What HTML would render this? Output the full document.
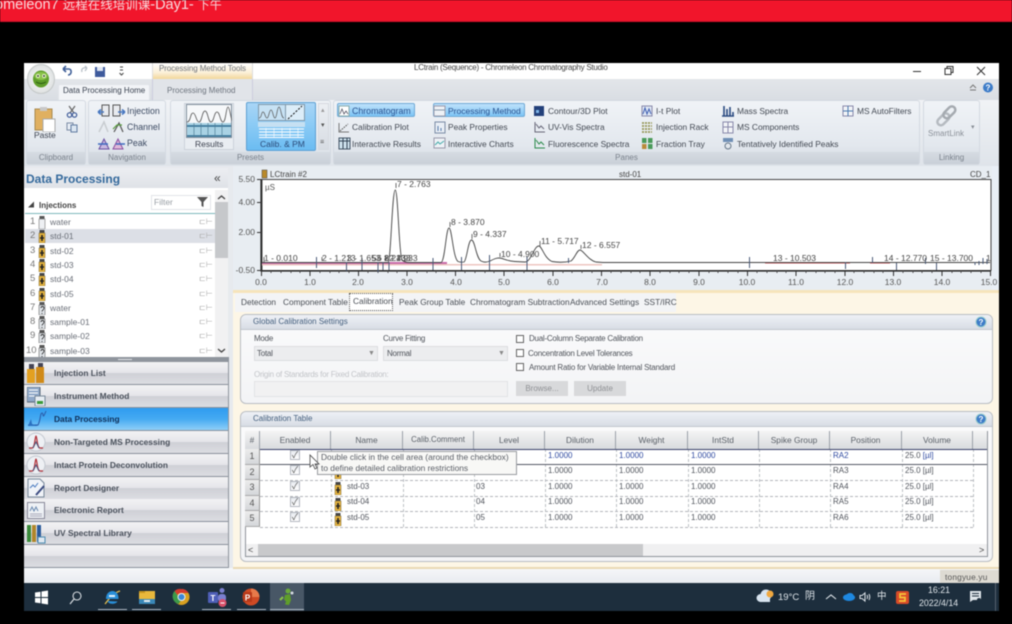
<!DOCTYPE html>
<html><head><meta charset="utf-8"><title>Chromeleon Chromatography Studio</title>
<style>
html,body{margin:0;padding:0;background:#000;width:1012px;height:624px;overflow:hidden}
*{box-sizing:border-box}
body{font-family:"Liberation Sans","Noto Sans CJK SC",sans-serif;font-size:9.5px;color:#3a3f48;position:relative}
div,span.t,svg.a{position:absolute}
.t{position:absolute;white-space:nowrap;line-height:12px}
.p{font-size:8.4px;color:#424852}
.f{font-size:8px;letter-spacing:-.25px;color:#50545b}
#root{position:absolute;left:0;top:0;width:1012px;height:624px;filter:blur(.4px)}
.grp{background:linear-gradient(#f0f3f7,#e3e8ee 70%,#d5dbe3);border:1px solid #d3d9e1;border-radius:3px;top:100px;height:65px}
.lab{position:absolute;left:0;right:0;bottom:0;height:12px;background:linear-gradient(#d6dbe2,#c9d0d8);text-align:center;line-height:12px;color:#7a828c;font-size:8px}
.sel{background:linear-gradient(#bfe2fb,#7cc4f5);border:1px solid #6fa9d6;border-radius:2px;height:14px}
.nav{position:absolute;left:24px;width:204px;height:23px;background:linear-gradient(#f2f2f4,#e6e6ea 48%,#cfd0d6 52%,#dcdde2);border-bottom:1px solid #8a919c;color:#4a515c;font-weight:bold;font-size:8.400px}
.nav .t{left:30px;top:5px}
.g{background:linear-gradient(#fbfbfc,#f3f4f6);border:1px solid #b9bdc3;border-radius:6px;left:240px;width:753px}
.gh{position:absolute;left:0;right:0;top:0;height:15px;background:linear-gradient(#eef1f6,#d8dde5);border-bottom:1px solid #c2c7cf;border-radius:6px 6px 0 0}
.h{position:absolute;top:431px;height:18px;background:linear-gradient(#f4f4f4,#d9dbde);border-right:1px solid #9aa0a8;text-align:center;line-height:18px;color:#5a6068;font-size:8.400px}
.c{position:absolute;font-size:8px;line-height:12px;color:#50545c;white-space:nowrap}
.b{color:#2f4aa0}
.ln{position:absolute;left:260px;width:713px;height:0;border-top:1px dashed #b3b6bb}
.vl{position:absolute;top:449px;height:78px;width:0;border-left:1px dashed #bcbfc4}
.cb{position:absolute;width:10px;height:10px;left:290px;border:1px solid #b4b8c0;background:linear-gradient(#e8ebf0,#fff);color:#555;font-size:9px;line-height:9px;text-align:center}
.num{position:absolute;left:245px;width:15px;background:linear-gradient(#ececec,#d5d7da);border-bottom:1px solid #aaa;border-right:1px solid #999;text-align:center;font-size:9px;color:#555;line-height:15px}
.tab{position:absolute;top:296px;font-size:8.300px;color:#4a4f56;white-space:nowrap;line-height:12px}
.ul{position:absolute;top:609px;height:1px;background:#aeb8c2;width:29px}
.n{position:absolute;left:30px;color:#777;font-size:9.500px;line-height:12px}
.s{position:absolute;left:50px;color:#6a6f78;font-size:8.500px;line-height:12px;white-space:nowrap}
.m{position:absolute;left:199px;color:#aaa;font-size:8px;line-height:12px}
</style></head><body>
<div id="root">
<svg width="0" height="0" style="position:absolute">
<defs>
<symbol id="vy" viewBox="0 0 8 13"><rect x="1.500" width="5" height="3" fill="#444"/><rect x="1" y="3" width="6" height="10" fill="#e5b23c" stroke="#7a6a3a" stroke-width=".5"/><path d="M4 5v6M2 8h4" stroke="#222" stroke-width="1.600"/></symbol>
<symbol id="vw" viewBox="0 0 8 13"><rect x="1.500" width="5" height="3" fill="#555"/><rect x="1" y="3" width="6" height="10" fill="#eef0f3" stroke="#777" stroke-width=".6"/></symbol>
<symbol id="vq" viewBox="0 0 8 13"><rect x="1.500" width="5" height="3" fill="#555"/><rect x="1" y="3" width="6" height="10" fill="#dfe3e8" stroke="#666" stroke-width=".6"/><path d="M3 6c0-2 3-2 3 0s-2 2-2 3.500M4 11v1" fill="none" stroke="#333" stroke-width=".9"/></symbol>
<symbol id="pk" viewBox="0 0 20 20"><circle cx="10" cy="10" r="9" fill="#eef0f4" stroke="#c3c8d0"/><path d="M3 16h3c3 0 3-12 4-12s1 12 4 12h3" fill="none" stroke="#b03038" stroke-width="1.200"/><path d="M7 16l3-6 3 6" fill="none" stroke="#4a5a80"/></symbol>
</defs></svg>

<!-- red top bar -->
<div style="left:0;top:0;width:1012px;height:22px;background:#f1152b;overflow:hidden;border-bottom:1px solid #c9122a"><span class="t" style="left:-5px;top:-3px;font-size:14.500px;line-height:16px;color:#f6d9dc">omeleon7 <span style="font-size:12.500px">远程在线培训课</span>-Day1- <span style="font-size:12px">下午</span></span></div>

<!-- window -->
<div style="left:24px;top:63px;width:975px;height:521px;background:#f2f4f7"></div>
<div style="left:24px;top:63px;width:975px;height:16px;background:#fff"></div>
<div style="left:24px;top:79px;width:975px;height:22px;background:linear-gradient(#e3e6ea,#d9dde3)"></div>
<div style="left:24px;top:100px;width:975px;height:66px;background:linear-gradient(#f1f3f6,#dfe4ea)"></div>

<!-- quick access / orb -->
<div style="left:27px;top:64px;width:28px;height:30px;border-radius:50%;background:radial-gradient(#fff,#d2d6d6);border:1px solid #c4c8c8"></div>
<svg class="a" style="left:30px;top:67px" width="22" height="24" viewBox="0 0 22 24"><ellipse cx="11" cy="12" rx="8" ry="8.500" fill="#5f9e2a"/><ellipse cx="11" cy="9" rx="6.500" ry="4" fill="#8bc34a"/><circle cx="8" cy="9" r="2" fill="#dff0c0"/><circle cx="14" cy="9" r="2" fill="#dff0c0"/><circle cx="8" cy="9" r=".9" fill="#222"/><circle cx="14" cy="9" r=".9" fill="#222"/><path d="M6 15q5 3 10 0" stroke="#2a5a12" fill="none"/></svg>
<svg class="a" style="left:60px;top:64px" width="70" height="14" viewBox="0 0 70 14"><path d="M3 5h6c3 0 3 6-1 6M3 5l3-3M3 5l3 3" fill="none" stroke="#3f5f98" stroke-width="1.600"/><path d="M27 4c-4-1-6 1-5 4M27 4l-2-2M27 4l-2 3" fill="none" stroke="#b9c0c8" stroke-width="1.300"/><rect x="35" y="3" width="10" height="10" fill="#3e5a9c"/><rect x="37" y="3" width="6" height="4" fill="#dfe6f2"/><path d="M60 3h3M60 6h3M59.500 9l2 2 2-2" stroke="#444" fill="none"/></svg>
<div style="left:152px;top:63px;width:101px;height:16px;background:linear-gradient(#fff,#fbf0d8 60%,#f3d79a);border-left:1px solid #ddd;border-right:1px solid #ddd"></div>
<span class="t" style="left:159px;top:63px;color:#6f737a;font-size:8px;letter-spacing:-.1px">Processing Method Tools</span>
<div style="left:152px;top:79px;width:101px;height:21px;background:#e1e4e9;border-left:1px solid #ccd;border-right:1px solid #ccd"></div>
<div style="left:58px;top:84px;width:92px;height:17px;background:#f2f4f7;border:1px solid #e0e3e8;border-bottom:none;border-radius:2px 2px 0 0"></div>
<span class="t" style="left:63px;top:85px;color:#3a4250;font-size:8px">Data Processing Home</span>
<span class="t" style="left:167px;top:85px;color:#6d747e;font-size:8px">Processing Method</span>
<span class="t" style="left:414px;top:62px;font-size:8px;letter-spacing:-.25px;color:#444">LCtrain (Sequence) - Chromeleon Chromatography Studio</span>
<svg class="a" style="left:905px;top:64px" width="90" height="14" viewBox="0 0 90 14"><path d="M8 7.500h8" stroke="#333" stroke-width="1"/><path d="M40 4.500h6v6h-6zM42 4.500V2.500h6v6h-2" fill="none" stroke="#333"/><path d="M72 3l8 8M80 3l-8 8" stroke="#333" stroke-width="1"/></svg>
<svg class="a" style="left:966px;top:81px" width="28" height="13" viewBox="0 0 28 13"><path d="M4 7l3-3 3 3M4 9h6" fill="none" stroke="#777"/><circle cx="22" cy="6.500" r="5" fill="#3d7cc8"/><text x="22" y="9.500" font-size="8" font-weight="bold" fill="#fff" text-anchor="middle">?</text></svg>

<!-- ribbon groups -->
<div class="grp" style="left:26px;width:60px"><div class="lab">Clipboard</div></div>
<div class="grp" style="left:88px;width:78px"><div class="lab">Navigation</div></div>
<div class="grp" style="left:170px;width:161px"><div class="lab">Presets</div></div>
<div class="grp" style="left:333px;width:587px"><div class="lab">Panes</div></div>
<div class="grp" style="left:923px;width:57px"><div class="lab">Linking</div></div>

<svg class="a" style="left:33px;top:107px" width="24" height="25" viewBox="0 0 24 25"><rect x="2" y="2" width="17" height="21" fill="#e0b060" stroke="#a88a50"/><rect x="7" y="0" width="7" height="4" fill="#c8c8c8"/><rect x="10" y="12" width="12" height="13" fill="#fff" stroke="#aaa"/></svg>
<span class="t" style="left:34px;top:129px;color:#3d4350;font-size:8.500px">Paste</span>
<svg class="a" style="left:66px;top:105px" width="12" height="28" viewBox="0 0 12 28"><path d="M3 1l5 7M9 1L4 8" stroke="#666" stroke-width="1.200"/><circle cx="3.500" cy="10" r="2.200" fill="none" stroke="#3d5a98" stroke-width="1.200"/><circle cx="8.500" cy="10" r="2.200" fill="none" stroke="#3d5a98" stroke-width="1.200"/><rect x="1" y="18" width="6" height="7" fill="#e8eef5" stroke="#7a8ba5"/><rect x="5" y="20" width="6" height="7" fill="#dbe6f2" stroke="#5f7aa0"/></svg>

<svg class="a" style="left:97px;top:104px" width="29" height="13" viewBox="0 0 29 13"><rect x="5" y="1" width="7" height="11" fill="#e8ebef" stroke="#555"/><path d="M1 8h6M1 8l3-2.500M1 8l3 2.500" stroke="#4777c0" stroke-width="1.500" fill="none"/><rect x="16" y="1" width="7" height="11" fill="#e8ebef" stroke="#555"/><path d="M21 8h7M28 8l-3-2.500M28 8l-3 2.500" stroke="#4777c0" stroke-width="1.500" fill="none"/></svg>
<svg class="a" style="left:97px;top:120px" width="29" height="13" viewBox="0 0 29 13"><path d="M2 12L7 2l4 10" fill="none" stroke="#c8ccd0" stroke-width="1.500"/><path d="M17 12l5-9 4 9" fill="none" stroke="#555" stroke-width="1.200"/><path d="M16 9l4-4h5" fill="none" stroke="#5aa040" stroke-width="1.200"/></svg>
<svg class="a" style="left:97px;top:137px" width="29" height="13" viewBox="0 0 29 13"><path d="M2 12L7 2l5 10z" fill="#c8b8e0" stroke="#6a50a0"/><path d="M1 7h10" stroke="#3d6ac0" stroke-width="1.500"/><path d="M16 12l5-10 5 10z" fill="#e0b8d8" stroke="#8a50a0"/><path d="M19 7h9" stroke="#3d6ac0" stroke-width="1.500"/></svg>
<span class="t" style="left:127px;top:105px;color:#3c4a62;font-size:8.800px">Injection</span>
<span class="t" style="left:127px;top:121px;color:#3c4a62;font-size:8.800px">Channel</span>
<span class="t" style="left:127px;top:137px;color:#3c4a62;font-size:8.800px">Peak</span>

<!-- Presets -->
<div style="left:184px;top:103px;width:50px;height:47px;background:#e9edf2;border:1px solid #ccd2da"></div>
<svg class="a" style="left:186px;top:104px" width="46" height="34" viewBox="0 0 46 34"><rect x=".5" y=".5" width="45" height="33" fill="#f6f8fa" stroke="#7f8d9c"/><path d="M1 18c4 0 3-9 6-9s3 9 6 9 3-11 6-11 3 11 6 11 3-10 6-10 3 10 6 10 3-15 5-15 3 15 5 15" fill="none" stroke="#555" stroke-width=".8"/><rect x="1" y="19" width="44" height="14" fill="#a9d2e4"/><path d="M1 22h44M1 32h44" stroke="#2f6c90" stroke-width="1.500"/><path d="M8 19v14M15 19v14M22 19v14M29 19v14M36 19v14" stroke="#4f7f98" stroke-width=".7"/></svg>
<span class="t" style="left:195px;top:138px;color:#3d4350;font-size:8.500px">Results</span>
<div style="left:246px;top:102px;width:70px;height:49px;background:linear-gradient(#a9d5f6,#8ccbf5 45%,#6bbcf2);border:1px solid #5c9fd2;border-radius:2px"></div>
<svg class="a" style="left:258px;top:104px" width="47" height="34" viewBox="0 0 47 34"><rect x=".5" y=".5" width="27" height="16" fill="#c7e2f4" stroke="#7f98aa"/><rect x="27.500" y=".5" width="19" height="16" fill="#dcedf8" stroke="#7f98aa"/><path d="M1 14c3 0 2-6 4-6s2 6 4 6 2-8 4-8 2 8 4 8 2-11 4-11 2 11 5 11" fill="none" stroke="#555" stroke-width=".7"/><path d="M30 15l14-13" stroke="#111" stroke-dasharray="2 1.500"/><rect x="0" y="18" width="47" height="5" fill="#c6e0f2"/><path d="M1 25h45M1 28h45M1 31h45M1 33.500h45" stroke="#fff" stroke-width=".9"/><path d="M8 24v10M16 24v10M24 24v10M32 24v10M40 24v10" stroke="#fff" stroke-width=".6"/></svg>
<span class="t" style="left:260px;top:138px;color:#2a4a78;font-size:8.500px">Calib. &amp; PM</span>
<div style="left:318px;top:103px;width:11px;height:47px;background:linear-gradient(#eceff3,#d7dce3);border:1px solid #d5d9df"></div>
<span class="t" style="left:321px;top:105px;color:#999;font-size:7px">▴</span>
<span class="t" style="left:321px;top:120px;color:#555;font-size:7px">▾</span>
<span class="t" style="left:320px;top:137px;color:#555;font-size:7px">≡</span>

<!-- Panes -->
<div class="sel" style="left:337px;top:103px;width:78px"></div>
<div class="sel" style="left:433px;top:103px;width:92px"></div>
<span class="t p" style="left:352px;top:105px;color:#2a5290;font-size:8.800px">Chromatogram</span>
<span class="t p" style="left:448px;top:105px;color:#2a5290;font-size:8.500px">Processing Method</span>
<span class="t p" style="left:352px;top:121px">Calibration Plot</span>
<span class="t p" style="left:352px;top:138px">Interactive Results</span>
<span class="t p" style="left:448px;top:121px">Peak Properties</span>
<span class="t p" style="left:448px;top:138px">Interactive Charts</span>
<span class="t p" style="left:548px;top:105px">Contour/3D Plot</span>
<span class="t p" style="left:548px;top:121px">UV-Vis Spectra</span>
<span class="t p" style="left:548px;top:138px">Fluorescence Spectra</span>
<span class="t p" style="left:656px;top:105px">I-t Plot</span>
<span class="t p" style="left:656px;top:121px">Injection Rack</span>
<span class="t p" style="left:656px;top:138px">Fraction Tray</span>
<span class="t p" style="left:737px;top:105px">Mass Spectra</span>
<span class="t p" style="left:737px;top:121px">MS Components</span>
<span class="t p" style="left:737px;top:138px">Tentatively Identified Peaks</span>
<span class="t p" style="left:857px;top:105px">MS AutoFilters</span>

<svg class="a" style="left:338px;top:105px" width="540" height="48" viewBox="0 0 540 48">
<rect x="1" y="1" width="10" height="10" fill="#fff" stroke="#8aa"/><path d="M2 9l2-5 2 5 2-3 2 3" stroke="#445" fill="none" stroke-width=".7"/>
<path d="M1 18v9h10" stroke="#777" fill="none"/><path d="M2 26l8-7" stroke="#555" stroke-dasharray="1.500 1"/>
<rect x="1" y="33" width="11" height="11" fill="#cfe3ee" stroke="#456"/><path d="M1 36h11M5 33v11M9 33v11" stroke="#345"/>
<rect x="96" y="1" width="11" height="10" fill="#eef2f6" stroke="#99a"/><path d="M96 5h11" stroke="#89a"/>
<rect x="97" y="17" width="10" height="11" fill="#e8eef5" stroke="#7a8ba5"/><path d="M100 26v-5M103 26v-3" stroke="#5577aa"/>
<rect x="96" y="33" width="11" height="10" fill="#eef2f6" stroke="#99a"/><path d="M97 40l3-3 2 2 4-3" stroke="#4aa" fill="none"/>
<rect x="196" y="1" width="10" height="10" fill="#23407a"/><rect x="198" y="5" width="3" height="3" fill="#7fb6ea"/>
<path d="M197 17v10h10M198 19l3 4 2-2 3 3" stroke="#667" fill="none"/>
<path d="M197 33v10h10M198 35l3 4 2-2 3 3" stroke="#2a8a4a" fill="none"/>
<rect x="304" y="1" width="10" height="10" fill="#dfe8f4" stroke="#88a"/><path d="M305 9l2-6 2 6 2-5 2 5" stroke="#3a5ab0" fill="none"/>
<path d="M304 18h10M304 21h10M304 24h10M304 27h10" stroke="#8a8a40" stroke-width="1.500" stroke-dasharray="2 1"/>
<rect x="304" y="33" width="4.500" height="5" fill="#4a9a5a"/><rect x="310" y="33" width="4.500" height="5" fill="#4a9a5a"/><rect x="304" y="39" width="4.500" height="5" fill="#b98a3a"/><rect x="310" y="39" width="4.500" height="5" fill="#4a9a5a"/>
<path d="M386 1v10M389 4v7M392 2v9M395 7v4M384 11h12" stroke="#2a4a80" stroke-width="1.600"/>
<rect x="385" y="17" width="10" height="11" fill="#f2f4f7" stroke="#88a"/><path d="M385 22h10M390 17v11" stroke="#88a"/>
<rect x="385" y="33" width="10" height="4" fill="#6f8fb5"/><circle cx="390" cy="41" r="3" fill="none" stroke="#678"/>
<rect x="505" y="1" width="10" height="10" fill="#f2f4f7" stroke="#88a"/><path d="M510 1v10M505 6h10" stroke="#4a7ab0"/>
</svg>

<!-- SmartLink -->
<svg class="a" style="left:933px;top:104px" width="26" height="24" viewBox="0 0 26 24"><rect x="3" y="12" width="14" height="7" rx="3.500" transform="rotate(-45 10 15)" fill="none" stroke="#b5bac0" stroke-width="2.500"/><rect x="9" y="5" width="14" height="7" rx="3.500" transform="rotate(-45 16 8)" fill="none" stroke="#a5aab0" stroke-width="2.500"/></svg>
<span class="t" style="left:928px;top:128px;color:#8a9098;font-size:8px">SmartLink</span>
<span class="t" style="left:971px;top:122px;color:#8a9098;font-size:7px">▾</span>

<!-- left panel -->
<div style="left:24px;top:166px;width:209px;height:402px;background:#e7eaee"></div>
<div style="left:24px;top:168px;width:204px;height:20px;background:linear-gradient(#eceef2,#dfe2e7)"></div>
<span class="t" style="left:26px;top:172px;font-size:12px;font-weight:bold;color:#34699c;line-height:14px">Data Processing</span>
<span class="t" style="left:214px;top:172px;font-size:12px;color:#444">«</span>
<div style="left:24px;top:188px;width:204px;height:169px;background:#fff"></div>
<div style="left:151px;top:195px;width:60px;height:15px;border:1px solid #e2e4e8;background:#fff"></div>
<span class="t" style="left:154px;top:196px;color:#9aa0a6;font-size:8.500px">Filter</span>
<svg class="a" style="left:197px;top:197px" width="11" height="10" viewBox="0 0 11 10"><path d="M0 0h11L6.500 5v5l-2-1V5z" fill="#555"/></svg>
<span class="t" style="left:28px;top:200px;color:#444;font-size:6px">◢</span>
<span class="t" style="left:39px;top:200px;color:#444;font-size:8px;font-weight:bold">Injections</span>
<div style="left:25px;top:213px;width:190px;height:1px;background:#7fb8bc"></div>
<div style="left:25px;top:229px;width:190px;height:14px;background:#dcdfe6"></div>

<span class="n" style="top:216px">1</span><svg class="a" style="left:38px;top:216px" width="8" height="13"><use href="#vw"/></svg><span class="s" style="top:216px">water</span>
<span class="n" style="top:230px">2</span><svg class="a" style="left:38px;top:230px" width="8" height="13"><use href="#vy"/></svg><span class="s" style="top:230px">std-01</span>
<span class="n" style="top:245px">3</span><svg class="a" style="left:38px;top:245px" width="8" height="13"><use href="#vy"/></svg><span class="s" style="top:245px">std-02</span>
<span class="n" style="top:259px">4</span><svg class="a" style="left:38px;top:259px" width="8" height="13"><use href="#vy"/></svg><span class="s" style="top:259px">std-03</span>
<span class="n" style="top:273px">5</span><svg class="a" style="left:38px;top:273px" width="8" height="13"><use href="#vy"/></svg><span class="s" style="top:273px">std-04</span>
<span class="n" style="top:288px">6</span><svg class="a" style="left:38px;top:288px" width="8" height="13"><use href="#vy"/></svg><span class="s" style="top:288px">std-05</span>
<span class="n" style="top:302px">7</span><svg class="a" style="left:38px;top:302px" width="8" height="13"><use href="#vq"/></svg><span class="s" style="top:302px">water</span>
<span class="n" style="top:316px">8</span><svg class="a" style="left:38px;top:316px" width="8" height="13"><use href="#vq"/></svg><span class="s" style="top:316px">sample-01</span>
<span class="n" style="top:330px">9</span><svg class="a" style="left:38px;top:330px" width="8" height="13"><use href="#vq"/></svg><span class="s" style="top:330px">sample-02</span>
<span class="n" style="left:26px;top:345px">10</span><svg class="a" style="left:38px;top:345px" width="8" height="13"><use href="#vq"/></svg><span class="s" style="top:345px">sample-03</span>
<span class="m" style="top:216px">⊏⊢</span><span class="m" style="top:230px">⊏⊢</span><span class="m" style="top:245px">⊏⊢</span><span class="m" style="top:259px">⊏⊢</span><span class="m" style="top:273px">⊏⊢</span><span class="m" style="top:288px">⊏⊢</span><span class="m" style="top:302px">⊏⊢</span><span class="m" style="top:316px">⊏⊢</span><span class="m" style="top:330px">⊏⊢</span><span class="m" style="top:345px">⊏⊢</span>

<div style="left:215px;top:190px;width:13px;height:167px;background:#f1f1f2"></div>
<div style="left:215px;top:202px;width:13px;height:56px;background:#c6c8cb"></div>
<svg class="a" style="left:216px;top:193px" width="11" height="164" viewBox="0 0 11 164"><path d="M2 6l3.500-3L9 6M2 156l3.500 3 3.500-3" fill="none" stroke="#444" stroke-width="1.300"/></svg>
<div style="left:24px;top:357px;width:204px;height:5px;background:#8f959d"></div>
<div style="left:118px;top:359px;width:14px;height:1px;background:#dfe2e6"></div>

<!-- nav buttons -->
<div class="nav" style="top:362px"><span class="t">Injection List</span></div>
<div class="nav" style="top:385px"><span class="t">Instrument Method</span></div>
<div class="nav" style="top:408px;background:linear-gradient(#2f9cf0,#45aaf2 50%,#8fcff8);color:#10305a"><span class="t">Data Processing</span></div>
<div class="nav" style="top:431px"><span class="t">Non-Targeted MS Processing</span></div>
<div class="nav" style="top:454px"><span class="t">Intact Protein Deconvolution</span></div>
<div class="nav" style="top:477px"><span class="t">Report Designer</span></div>
<div class="nav" style="top:499px"><span class="t">Electronic Report</span></div>
<div class="nav" style="top:522px"><span class="t">UV Spectral Library</span></div>
<div class="nav" style="top:545px;height:23px"></div>
<div style="left:228px;top:357px;width:1px;height:211px;background:#8f959d"></div>
<svg class="a" style="left:26px;top:363px" width="20" height="21" viewBox="0 0 20 21"><rect x="1" y="6" width="8" height="14" fill="#e3a020"/><rect x="10" y="4" width="8" height="16" fill="#d08a18"/><rect x="3" y="1" width="5" height="5" fill="#445"/><rect x="12" y="0" width="5" height="4" fill="#445"/></svg>
<svg class="a" style="left:27px;top:387px" width="19" height="19" viewBox="0 0 19 19"><rect x="0" y="0" width="13" height="15" fill="#8fa8c8" stroke="#567"/><path d="M2 3h9M2 6h9M2 9h9" stroke="#fff"/><rect x="8" y="9" width="10" height="10" fill="#e6ecf2" stroke="#789"/><rect x="10" y="14" width="6" height="3" fill="#3a9a3a"/></svg>
<svg class="a" style="left:27px;top:410px" width="20" height="18" viewBox="0 0 20 18"><path d="M1 15h10c3-6 2-12 4-12s0 8 4-2" fill="none" stroke="#2a5aa8"/><path d="M1 16l3-7 1 5 6 2z" fill="#2a70c0"/></svg>
<svg class="a" style="left:26px;top:432px" width="20" height="20"><use href="#pk"/></svg>
<svg class="a" style="left:26px;top:455px" width="20" height="20"><use href="#pk"/></svg>
<svg class="a" style="left:27px;top:478px" width="19" height="20" viewBox="0 0 19 20"><path d="M1 1h12l4 4v14H1z" fill="#f0f3f8" stroke="#789"/><path d="M3 10l3-3 2 2 3-4" stroke="#4a7ac0" fill="none"/><path d="M9 17l8-9" stroke="#3a4a80" stroke-width="2"/></svg>
<svg class="a" style="left:27px;top:502px" width="18" height="17" viewBox="0 0 18 17"><rect x=".5" y=".5" width="17" height="16" fill="#eef1f5" stroke="#889"/><path d="M3 9l2-4 2 4 2-4 2 4" stroke="#6a8ab0" fill="none"/><path d="M3 12h12M3 14h12" stroke="#aab"/></svg>
<svg class="a" style="left:26px;top:524px" width="20" height="20" viewBox="0 0 20 20"><rect x="1" y="1" width="4" height="17" fill="#3a8a3a"/><rect x="6" y="1" width="4" height="17" fill="#b0862a"/><rect x="11" y="1" width="4" height="17" fill="#2a5a9a"/><rect x="12" y="13" width="7" height="6" fill="#dfe8f0" stroke="#4a8ab0"/></svg>

<!-- plot area -->
<div style="left:233px;top:166px;width:766px;height:124px;background:#e8edf2"></div>
<div style="left:992px;top:166px;width:7px;height:124px;background:#e9eff6"></div>
<svg class="a" style="left:233px;top:166px" width="766" height="124" viewBox="233 166 766 124" font-family="Liberation Sans,sans-serif">
<rect x="262" y="179.500" width="729" height="91" fill="#fff" stroke="#444"/>
<path d="M261 179v92h730" fill="none" stroke="#222" stroke-width="1.200"/>
<path d="M257 179.500h5M257 202.500h5M257 232.500h5M257 270.500h5" stroke="#333"/>
<path d="M261.500 271v5M310 271v5M358.500 271v5M407 271v5M455.500 271v5M504 271v5M553 271v5M601.500 271v5M650 271v5M699 271v5M747.500 271v5M796 271v5M845 271v5M893.500 271v5M942 271v5M990.500 271v5" stroke="#333"/>
<path d="M271 271v2M281 271v2M291 271v2M300 271v2M320 271v2M330 271v2M339 271v2M349 271v2M368 271v2M378 271v2M388 271v2M397 271v2M417 271v2M427 271v2M436 271v2M446 271v2M465 271v2M475 271v2M485 271v2M494 271v2M514 271v2M524 271v2M533 271v2M543 271v2M563 271v2M572 271v2M582 271v2M592 271v2M611 271v2M621 271v2M631 271v2M640 271v2M660 271v2M670 271v2M679 271v2M689 271v2M709 271v2M718 271v2M728 271v2M738 271v2M757 271v2M767 271v2M777 271v2M786 271v2M806 271v2M816 271v2M825 271v2M835 271v2M854 271v2M864 271v2M874 271v2M883 271v2M903 271v2M913 271v2M922 271v2M932 271v2M952 271v2M961 271v2M971 271v2M981 271v2" stroke="#555"/>
<rect x="262" y="262" width="185" height="2" fill="#c76aa8"/><rect x="262" y="264" width="340" height="1.500" fill="#eec6c0"/>
<path d="M765 263h85M870 263h20" stroke="#d84a50"/>
<path d="M262 262.500H388C391 262 392 190 395.300 190C398 190 399 255 402 260C404 262 406 262.500 410 262.500H441C445 262 446 228 449 228C452 228 453 258 458 261.500C461 262.500 462 262.500 464 262C467 260 468 240 471.500 240C475 240 476 258 481 261C484 262.500 486 262.500 490 261C494 259 496 258 499 258C503 258 506 261 515 261.500L525 262C531 262 534 246 538.800 246C542 246 544 258 552 261.500C558 262.500 565 262.500 571 261C575 258 577 250 580 250C583 250 588 260 596 262L603 262.500H990" fill="none" stroke="#444" stroke-width=".9"/>
<path d="M316.500 257v11M346.500 262v9M362 258v12M378 262v10M383 262v8M389 262v8M433 258v12M461.500 257v13M489.500 255v15M527 257v13M568.500 258v5M749.500 257v11M845.500 262v7M872.500 257v6M896.500 263v7M925.500 258v6M936.500 263v7M975 262v3M979 261v4M983 258v6M987 259v5" stroke="#4a5a78"/>
<path d="M396 183v5M450 222v5M472 234v5M500 253v4M540 241v5M581 245v4M264 257v5M322 257v4M386 256v5" stroke="#333" stroke-width=".7"/>
<g font-size="8.500" fill="#444">
<text x="264" y="261">1 - 0.010</text><text x="322" y="261">2 - 1.213</text><text x="347" y="261">3 - 1.653</text><text x="372" y="261">5 - 2.213</text><text x="377" y="261">6 - 2.433</text><text x="384" y="261">8 - 2.933</text>
<text x="397" y="187">7 - 2.763</text><text x="451" y="225">8 - 3.870</text><text x="473" y="237">9 - 4.337</text><text x="501" y="257">10 - 4.900</text><text x="541" y="244">11 - 5.717</text><text x="582" y="248">12 - 6.557</text><text x="773" y="261">13 - 10.503</text><text x="884" y="261">14 - 12.770</text><text x="930" y="261">15 - 13.700</text><text x="986" y="261">1</text>
</g>
<g font-size="8.500" fill="#555" text-anchor="end"><text x="255" y="182">5.50</text><text x="255" y="205">4.00</text><text x="255" y="235">2.00</text><text x="255" y="273">-0.50</text></g>
<g font-size="8.500" fill="#555" text-anchor="middle"><text x="261" y="285">0.0</text><text x="310" y="285">1.0</text><text x="358" y="285">2.0</text><text x="407" y="285">3.0</text><text x="456" y="285">4.0</text><text x="504" y="285">5.0</text><text x="553" y="285">6.0</text><text x="602" y="285">7.0</text><text x="650" y="285">8.0</text><text x="699" y="285">9.0</text><text x="747" y="285">10.0</text><text x="796" y="285">11.0</text><text x="845" y="285">12.0</text><text x="893" y="285">13.0</text><text x="942" y="285">14.0</text><text x="989" y="285">15.0</text></g>
<text x="265" y="190" font-size="8" fill="#555">µS</text>
<text x="270" y="177" font-size="8" fill="#444">LCtrain #2</text>
<text x="619" y="177" font-size="8" fill="#444">std-01</text>
<text x="970" y="177" font-size="8" fill="#444">CD_1</text>
<rect x="262" y="170" width="5" height="8" fill="#b98a2a" stroke="#444" stroke-width=".5"/>
</svg>

<!-- lower area -->
<div style="left:233px;top:290px;width:766px;height:278px;background:#fdf6e6"></div>
<div style="left:233px;top:290px;width:766px;height:3px;background:#f6e4bb"></div>
<div style="left:235px;top:293px;width:441px;height:19px;background:#f3f4f6"></div>
<div style="left:349px;top:293px;width:44px;height:18px;background:#fff;border:1px dotted #555"></div>
<span class="tab" style="left:241px">Detection</span>
<span class="tab" style="left:283px">Component Table</span>
<span class="tab" style="left:353px;top:295px">Calibration</span>
<span class="tab" style="left:399px">Peak Group Table</span>
<span class="tab" style="left:470px">Chromatogram Subtraction</span>
<span class="tab" style="left:570px">Advanced Settings</span>
<span class="tab" style="left:644px">SST/IRC</span>

<!-- global group -->
<div class="g" style="top:314px;height:90px"><div class="gh"></div></div>
<span class="t" style="left:253px;top:316px;color:#46607f;font-size:8px">Global Calibration Settings</span>
<svg class="a" style="left:975px;top:316px" width="12" height="12" viewBox="0 0 12 12"><circle cx="6" cy="6" r="5" fill="#3d7cc8" stroke="#9cc"/><text x="6" y="9" font-size="8" font-weight="bold" fill="#fff" text-anchor="middle">?</text></svg>
<span class="t f" style="left:254px;top:333px">Mode</span>
<span class="t f" style="left:383px;top:333px">Curve Fitting</span>
<div style="left:254px;top:346px;width:124px;height:15px;background:#ecedef;border:1px solid #dcdde0"></div>
<div style="left:383px;top:346px;width:125px;height:15px;background:#ecedef;border:1px solid #dcdde0"></div>
<span class="t f" style="left:257px;top:348px">Total</span>
<span class="t f" style="left:387px;top:348px">Normal</span>
<span class="t" style="left:368px;top:348px;font-size:7px;color:#888">▼</span>
<span class="t" style="left:498px;top:348px;font-size:7px;color:#888">▼</span>
<span class="t f" style="left:254px;top:369px;color:#c2c4c8">Origin of Standards for Fixed Calibration:</span>
<div style="left:254px;top:381px;width:254px;height:16px;background:#f1f1f2;border:1px solid #e2e3e5"></div>
<div style="left:516px;top:381px;width:52px;height:15px;background:#d8d9db;text-align:center;line-height:15px;color:#8f9195;font-size:8px">Browse...</div>
<div style="left:574px;top:381px;width:52px;height:15px;background:#d8d9db;text-align:center;line-height:15px;color:#8f9195;font-size:8px">Update</div>
<div style="left:516px;top:335px;width:8px;height:8px;border:1px solid #666;background:#fff"></div>
<div style="left:516px;top:349px;width:8px;height:8px;border:1px solid #666;background:#fff"></div>
<div style="left:516px;top:363px;width:8px;height:8px;border:1px solid #666;background:#fff"></div>
<span class="t f" style="left:529px;top:333px">Dual-Column Separate Calibration</span>
<span class="t f" style="left:528px;top:348px">Concentration Level Tolerances</span>
<span class="t f" style="left:529px;top:362px;letter-spacing:-.2px">Amount Ratio for Variable Internal Standard</span>

<!-- calibration table group -->
<div class="g" style="top:411px;height:151px"><div class="gh"></div></div>
<span class="t" style="left:253px;top:413px;color:#46607f;font-size:8px">Calibration Table</span>
<svg class="a" style="left:975px;top:413px" width="12" height="12" viewBox="0 0 12 12"><circle cx="6" cy="6" r="5" fill="#3d7cc8" stroke="#9cc"/><text x="6" y="9" font-size="8" font-weight="bold" fill="#fff" text-anchor="middle">?</text></svg>
<div style="left:245px;top:431px;width:743px;height:126px;background:#fff;border:1px solid #8f949b"></div>
<div class="h" style="left:245px;width:15px">#</div>
<div class="h" style="left:260px;width:71px">Enabled</div>
<div class="h" style="left:331px;width:72px">Name</div>
<div class="h" style="left:403px;width:71px;font-size:7.800px">Calib.Comment</div>
<div class="h" style="left:474px;width:71px">Level</div>
<div class="h" style="left:545px;width:71px">Dilution</div>
<div class="h" style="left:616px;width:72px">Weight</div>
<div class="h" style="left:688px;width:71px">IntStd</div>
<div class="h" style="left:759px;width:71px">Spike Group</div>
<div class="h" style="left:830px;width:72px">Position</div>
<div class="h" style="left:902px;width:71px">Volume</div>
<div class="h" style="left:973px;width:14px;border-right:none"></div>

<div class="vl" style="left:331px"></div><div class="vl" style="left:403px"></div><div class="vl" style="left:474px"></div><div class="vl" style="left:545px"></div><div class="vl" style="left:616px"></div><div class="vl" style="left:688px"></div><div class="vl" style="left:759px"></div><div class="vl" style="left:830px"></div><div class="vl" style="left:902px"></div><div class="vl" style="left:973px"></div>
<div style="left:260px;top:449px;width:727px;height:1px;background:#39406a"></div>
<div style="left:260px;top:464px;width:727px;height:1px;background:#565a66"></div>
<div class="ln" style="top:480px"></div><div class="ln" style="top:496px"></div><div class="ln" style="top:511px"></div><div class="ln" style="top:527px"></div>

<div class="num" style="top:449px;height:16px">1</div>
<div class="num" style="top:465px;height:15px">2</div>
<div class="num" style="top:480px;height:16px">3</div>
<div class="num" style="top:496px;height:15px">4</div>
<div class="num" style="top:511px;height:16px">5</div>

<div class="cb" style="top:450px">✓</div><div class="cb" style="top:465px">✓</div><div class="cb" style="top:481px">✓</div><div class="cb" style="top:497px">✓</div><div class="cb" style="top:512px">✓</div>

<svg class="a" style="left:334px;top:466px" width="8" height="13"><use href="#vy"/></svg>
<svg class="a" style="left:334px;top:482px" width="8" height="13"><use href="#vy"/></svg>
<svg class="a" style="left:334px;top:498px" width="8" height="13"><use href="#vy"/></svg>
<svg class="a" style="left:334px;top:513px" width="8" height="13"><use href="#vy"/></svg>
<span class="c" style="left:347px;top:481px">std-03</span><span class="c" style="left:347px;top:496px">std-04</span><span class="c" style="left:347px;top:512px">std-05</span>
<span class="c" style="left:476px;top:481px">03</span><span class="c" style="left:476px;top:496px">04</span><span class="c" style="left:476px;top:512px">05</span>

<span class="c b" style="left:548px;top:450px">1.0000</span><span class="c" style="left:548px;top:465px">1.0000</span><span class="c" style="left:548px;top:481px">1.0000</span><span class="c" style="left:548px;top:496px">1.0000</span><span class="c" style="left:548px;top:512px">1.0000</span>
<span class="c b" style="left:619px;top:450px">1.0000</span><span class="c" style="left:619px;top:465px">1.0000</span><span class="c" style="left:619px;top:481px">1.0000</span><span class="c" style="left:619px;top:496px">1.0000</span><span class="c" style="left:619px;top:512px">1.0000</span>
<span class="c b" style="left:691px;top:450px">1.0000</span><span class="c" style="left:691px;top:465px">1.0000</span><span class="c" style="left:691px;top:481px">1.0000</span><span class="c" style="left:691px;top:496px">1.0000</span><span class="c" style="left:691px;top:512px">1.0000</span>
<span class="c b" style="left:833px;top:450px">RA2</span><span class="c" style="left:833px;top:465px">RA3</span><span class="c" style="left:833px;top:481px">RA4</span><span class="c" style="left:833px;top:496px">RA5</span><span class="c" style="left:833px;top:512px">RA6</span>
<span class="c" style="left:905px;top:450px">25.0 <span class="b">[µl]</span></span><span class="c" style="left:905px;top:465px">25.0 [µl]</span><span class="c" style="left:905px;top:481px">25.0 [µl]</span><span class="c" style="left:905px;top:496px">25.0 [µl]</span><span class="c" style="left:905px;top:512px">25.0 [µl]</span>

<!-- scrollbar -->
<div style="left:246px;top:544px;width:741px;height:12px;background:#f0f0f1"></div>
<div style="left:258px;top:544px;width:385px;height:12px;background:#c8c9cb"></div>
<span class="t" style="left:248px;top:544px;font-size:9px;color:#444">&lt;</span>
<span class="t" style="left:979px;top:544px;font-size:9px;color:#444">&gt;</span>

<!-- tooltip -->
<div style="left:317px;top:451px;width:200px;height:24px;background:#f8f8f6;border:1px solid #9a9ca0"></div>
<span class="t" style="left:321px;top:452px;font-size:8.400px;color:#5a5e66;line-height:11px">Double click in the cell area (around the checkbox)</span>
<span class="t" style="left:321px;top:463px;font-size:8.400px;color:#5a5e66;line-height:11px">to define detailed calibration restrictions</span>
<svg class="a" style="left:309px;top:454px" width="11" height="16" viewBox="0 0 11 16"><path d="M1 1v12l3-2.500 2 4.500 2-1-2-4h4z" fill="#fff" stroke="#444" stroke-width=".8"/></svg>

<!-- status bar -->
<div style="left:24px;top:568px;width:975px;height:15px;background:linear-gradient(#f6f7f9,#e8ebf0)"></div>
<div style="left:233px;top:567px;width:766px;height:2px;background:#e9d9b4"></div>
<div style="left:940px;top:570px;width:59px;height:13px;background:#dedbd3"></div>
<span class="t" style="left:945px;top:571px;font-size:8.300px;letter-spacing:.2px;color:#555">tongyue.yu</span>

<!-- taskbar -->
<div style="left:24px;top:583px;width:975px;height:28px;background:#1d2e3d"></div>
<div style="left:270px;top:583px;width:34px;height:28px;background:#485766"></div>
<svg class="a" style="left:24px;top:583px" width="290" height="28" viewBox="24 583 290 28">
<path d="M35 592.500l5.500-.8v5.300H35zM41.500 591.500l6.500-1v6.500h-6.500zM35 598h5.500v5.300l-5.500-.8zM41.500 598H48v6.500l-6.500-1z" fill="#fff"/>
<circle cx="77" cy="596" r="4" fill="none" stroke="#d8dde2" stroke-width="1.100"/><path d="M74 599l-4 5" stroke="#d8dde2" stroke-width="1.200"/>
<path d="M105 604c5-7 11-12 15-13" fill="none" stroke="#e8c050" stroke-width="1.200"/><path d="M118 598.500h-11.500c0-5 3.500-7 6-7s5.500 2 5.500 7zM108 601c1 3 7 3 9 .5" fill="#2a8fd8" stroke="#2a8fd8"/><path d="M109 596h6" stroke="#e6f2fb" stroke-width="2"/>
<rect x="139" y="591" width="16" height="13" fill="#e8b83c"/><rect x="139" y="591" width="6" height="2" fill="#c8961e"/><rect x="139" y="599" width="16" height="5" fill="#3a88b8"/><rect x="144" y="600" width="6" height="2" fill="#e6eef3"/>
<circle cx="181.500" cy="597" r="8" fill="#d8a020"/><path d="M181.500 589a8 8 0 0 1 7 4h-7a4 4 0 0 0-4 2l-3-4a8 8 0 0 1 7-2z" fill="#d43a30"/><path d="M174.500 591a8 8 0 0 0 4 13l3.500-5a4 4 0 0 1-4-3z" fill="#3d9a4a"/><circle cx="181.500" cy="597" r="3.500" fill="#3a86d8" stroke="#eee"/>
<rect x="208" y="592" width="10" height="11" rx="1" fill="#4f5fb8"/><text x="213" y="601" font-size="8" font-weight="bold" fill="#fff" text-anchor="middle" font-family="Liberation Sans">T</text><circle cx="222" cy="590.500" r="2.500" fill="#7a80d0"/><rect x="218" y="594" width="8" height="8" rx="3" fill="#7a80d0"/><circle cx="222.500" cy="603" r="4" fill="#d8506a"/><path d="M220.500 603h4" stroke="#fff"/>
<circle cx="251" cy="597" r="8.500" fill="#cf4a24"/><path d="M251 588.500a8.500 8.500 0 0 1 8.500 8.500H251z" fill="#e87a4a"/><rect x="243" y="592" width="9" height="10" rx="1" fill="#b83a1a"/><text x="247.500" y="600.500" font-size="8" font-weight="bold" fill="#fff" text-anchor="middle" font-family="Liberation Sans">P</text>
<circle cx="288" cy="591" r="2.500" fill="#6aaa3a"/><path d="M285 595l5-1 1 6-2 5-4-.5 1-3-2-2z" fill="#5f9e2a"/><path d="M283 597l-3 3" stroke="#8bc34a" stroke-width="2"/><circle cx="292" cy="593" r="1.500" fill="#d8dde2"/>
</svg>
<div class="ul" style="left:98px"></div><div class="ul" style="left:132px"></div><div class="ul" style="left:202px"></div><div class="ul" style="left:237px"></div><div class="ul" style="left:270px;width:34px"></div>

<svg class="a" style="left:755px;top:587px" width="20" height="18" viewBox="0 0 20 18"><ellipse cx="6" cy="11" rx="4.500" ry="4" fill="#d8e4f0"/><ellipse cx="11" cy="8" rx="5.500" ry="5.500" fill="#d8e4f0"/><rect x="5" y="10" width="10" height="5" fill="#d8e4f0"/><circle cx="15" cy="7" r="3.500" fill="#f0a840"/></svg>
<span class="t" style="left:778px;top:592px;font-size:9.500px;color:#dfe5ea">19°C</span>
<span class="t" style="left:805px;top:591px;font-size:10px;color:#dfe5ea">阴</span>
<svg class="a" style="left:825px;top:593px" width="12" height="8" viewBox="0 0 12 8"><path d="M1 6l5-4 5 4" fill="none" stroke="#dfe5ea" stroke-width="1.100"/></svg>
<svg class="a" style="left:842px;top:592px" width="14" height="10" viewBox="0 0 14 10"><ellipse cx="7" cy="5.500" rx="6" ry="3.500" fill="#1e88e0"/><ellipse cx="8" cy="3.500" rx="3.500" ry="2.500" fill="#1e88e0"/></svg>
<svg class="a" style="left:859px;top:591px" width="12" height="12" viewBox="0 0 12 12"><path d="M1 4.500h2l3-2.500v8L3 7.500H1z" fill="none" stroke="#dfe5ea"/><path d="M8 4q1 2 0 4M10 3q1.500 3 0 6" fill="none" stroke="#dfe5ea"/></svg>
<span class="t" style="left:877px;top:591px;font-size:9.500px;color:#dfe5ea">中</span>
<svg class="a" style="left:896px;top:591px" width="13" height="13" viewBox="0 0 13 13"><rect x="0" y="0" width="13" height="13" rx="2" fill="#d84a28"/><path d="M10 3H4v3.500h5V10H3" fill="none" stroke="#f5c53a" stroke-width="1.700"/></svg>
<span class="t" style="left:928px;top:584px;font-size:8.800px;color:#dfe5ea">16:21</span>
<span class="t" style="left:919px;top:597px;font-size:8.800px;color:#dfe5ea">2022/4/14</span>
<svg class="a" style="left:969px;top:590px" width="13" height="13" viewBox="0 0 13 13"><path d="M1 1h11v9H4l-3 2z" fill="#dfe5ea"/><path d="M3 3.500h7M3 6h7" stroke="#1d2e3d"/><circle cx="10" cy="10" r="2" fill="#1d2e3d"/></svg>
<div style="left:995px;top:583px;width:1px;height:28px;background:#56626e"></div>
</div>
</body></html>
